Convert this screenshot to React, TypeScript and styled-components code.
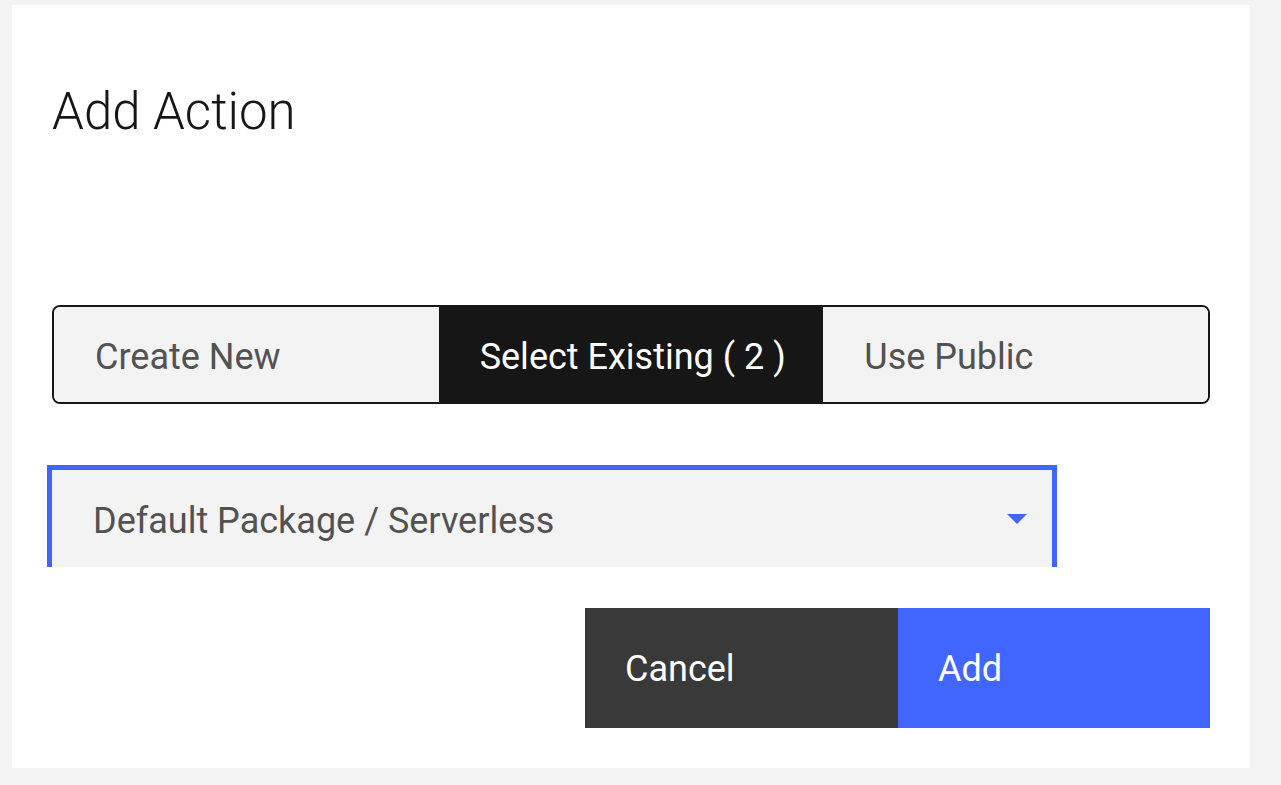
import React, { useState } from "react";
import styled, { createGlobalStyle } from "styled-components";

const Global = createGlobalStyle`
  html, body { margin: 0; padding: 0; background: #f3f3f3; }
  body { font-family: Roboto, "Noto Sans", "Liberation Sans", sans-serif; }
  * { box-sizing: border-box; }
`;

const Page = styled.div`
  width: 1281px;
  height: 785px;
  padding: 5px 0 0 12px;
`;

const Modal = styled.div`
  width: 1238px;
  height: 763px;
  background: #ffffff;
  padding: 0 40px 40px 40px;
  display: flex;
  flex-direction: column;
`;

const Title = styled.h2`
  margin: 77px 0 0 0;
  font-size: 51px;
  line-height: 60px;
  font-weight: 300;
  color: #161616;
  letter-spacing: 0;
`;

const Tabs = styled.div`
  margin-top: 163px;
  height: 99px;
  border: 2px solid #161616;
  border-radius: 8px;
  overflow: hidden;
  display: grid;
  grid-template-columns: 1fr 1fr 1fr;
`;

const Tab = styled.button<{ $active?: boolean }>`
  border: none;
  margin: 0;
  font-family: inherit;
  font-size: 36px;
  font-weight: 400;
  text-align: left;
  padding: 4px 0 0 41px;
  cursor: pointer;
  background: ${(p) => (p.$active ? "#161616" : "#f3f3f3")};
  color: ${(p) => (p.$active ? "#ffffff" : "#525252")};
`;

const Dropdown = styled.div`
  margin: 61px 0 0 -5px;
  width: 1010px;
  height: 102px;
  border: 5px solid #4166ff;
  border-bottom: none;
  background: #f3f3f3;
  display: flex;
  align-items: center;
  justify-content: space-between;
  padding: 0 25px 0 41px;
  font-size: 36px;
  color: #525252;
`;

const Label = styled.span`
  padding-top: 4px;
`;

const Caret = styled.svg`
  width: 20px;
  height: 10px;
`;

const Actions = styled.div`
  margin-top: 41px;
  display: flex;
  justify-content: flex-end;
`;

const ActionButton = styled.button<{ $primary?: boolean }>`
  width: ${(p) => (p.$primary ? "312px" : "313px")};
  height: 120px;
  border: none;
  margin: 0;
  padding: 2px 0 0 40px;
  text-align: left;
  font-family: inherit;
  font-size: 36px;
  font-weight: 400;
  color: #ffffff;
  background: ${(p) => (p.$primary ? "#4166ff" : "#393939")};
  cursor: pointer;
`;

export default function App() {
  const [active, setActive] = useState(1);
  const tabs = ["Create New", "Select Existing ( 2 )", "Use Public"];
  return (
    <Page>
      <Global />
      <Modal>
        <Title>Add Action</Title>
        <Tabs>
          {tabs.map((t, i) => (
            <Tab key={t} $active={active === i} onClick={() => setActive(i)}>
              {t}
            </Tab>
          ))}
        </Tabs>
        <Dropdown>
          <Label>Default Package / Serverless</Label>
          <Caret viewBox="0 0 20 10">
            <path d="M0 0 L20 0 L10 10 Z" fill="#4166ff" />
          </Caret>
        </Dropdown>
        <Actions>
          <ActionButton>Cancel</ActionButton>
          <ActionButton $primary>Add</ActionButton>
        </Actions>
      </Modal>
    </Page>
  );
}
